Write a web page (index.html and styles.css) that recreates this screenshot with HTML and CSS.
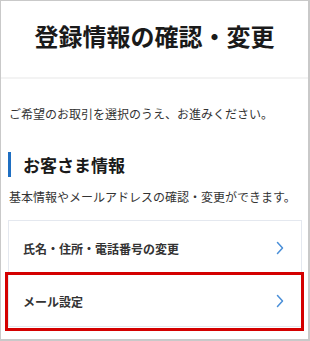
FILE: index.html
```html
<!DOCTYPE html>
<html lang="ja">
<head>
    <meta charset="UTF-8">
    <meta name="viewport" content="width=device-width, initial-scale=1.0">
    <title>登録情報の確認・変更</title>
    <link rel="stylesheet" href="styles.css">
</head>
<body>
    <div class="frame">
        <header class="page-header">
            <h1 class="page-title">登録情報の確認・変更</h1>
        </header>

        <main class="content">
            <p class="lead">ご希望のお取引を選択のうえ、お進みください。</p>

            <h2 class="section-title">お客さま情報</h2>
            <p class="section-desc">基本情報やメールアドレスの確認・変更ができます。</p>

            <ul class="menu-list">
                <li class="menu-item">
                    <a href="#" class="menu-link">
                        <span>氏名・住所・電話番号の変更</span>
                        <svg class="chevron" viewBox="0 0 8 14" fill="none" stroke="currentColor">
                            <path stroke-width="1.5" stroke-linecap="round" stroke-linejoin="round" d="M1.5 1.5L6.5 7l-5 5.5" />
                        </svg>
                    </a>
                </li>
                <li class="menu-item">
                    <a href="#" class="menu-link">
                        <span>メール設定</span>
                        <svg class="chevron" viewBox="0 0 8 14" fill="none" stroke="currentColor">
                            <path stroke-width="1.5" stroke-linecap="round" stroke-linejoin="round" d="M1.5 1.5L6.5 7l-5 5.5" />
                        </svg>
                    </a>
                    <span class="highlight"></span>
                </li>
            </ul>
        </main>
    </div>
</body>
</html>
```

FILE: styles.css
```css
* {
    box-sizing: border-box;
}

body {
    margin: 0;
    background: #fff;
    font-family: "Noto Sans CJK JP", "Noto Sans", sans-serif;
    color: #333;
}

.frame {
    width: 310px;
    height: 341px;
    border: 1px solid #c9c9c9;
    border-right-width: 2px;
    border-bottom-width: 2px;
    overflow: hidden;
}

.page-header {
    height: 78px;
    padding-top: 21px;
    border-bottom: 2px solid #f3f3f3;
}

.page-title {
    margin: 0;
    font-size: 24px;
    line-height: 28px;
    font-weight: 700;
    text-align: center;
    color: #1a1a1a;
}

.content {
    padding: 0 7px 0 7px;
}

.lead {
    margin: 26px 0 0 1px;
    font-size: 12px;
    line-height: 18px;
    color: #333;
}

.section-title {
    margin: 29px 0 0 0;
    padding-left: 12px;
    border-left: 3px solid #1f6fc2;
    font-size: 17px;
    line-height: 25px;
    font-weight: 700;
    color: #1a1a1a;
}

.section-desc {
    margin: 11px 0 0 1px;
    font-size: 12px;
    line-height: 18px;
    color: #333;
}

.menu-list {
    list-style: none;
    margin: 14px 0 0 0;
    padding: 0;
    width: 294px;
    border: 1px solid #e4e8ef;
}

.menu-item {
    position: relative;
}

.menu-item + .menu-item {
    border-top: 1px solid #e4e8ef;
}

.menu-link {
    display: flex;
    align-items: center;
    justify-content: space-between;
    height: 52px;
    padding: 2px 17px 0 14px;
    font-size: 12px;
    font-weight: 700;
    color: #333;
    text-decoration: none;
}

.chevron {
    width: 8px;
    height: 14px;
    color: #4a8fd8;
}

.highlight {
    position: absolute;
    top: -2px;
    left: -4px;
    right: -3px;
    bottom: -5px;
    border: 3px solid #d40000;
    pointer-events: none;
}
```
